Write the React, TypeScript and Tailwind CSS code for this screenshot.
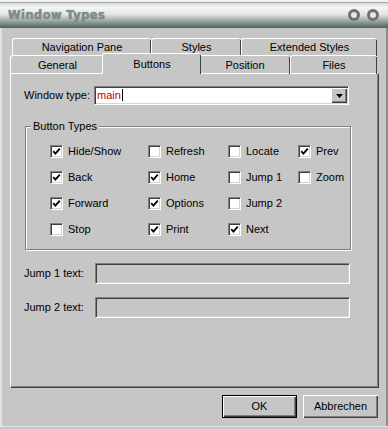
import React from "react";

const sunken =
  "border-t border-l border-t-[#808080] border-l-[#808080] border-b border-r border-b-white border-r-white shadow-[inset_1px_1px_0_#404040,inset_-1px_-1px_0_#d4d4d4]";

const raised =
  "shadow-[inset_1px_1px_0_#ffffff,inset_-1px_-1px_0_#404040,inset_-2px_-2px_0_#808080]";

function CheckBox({ checked }: { checked: boolean }) {
  return (
    <span className={`flex h-[13px] w-[13px] shrink-0 items-center justify-center bg-white ${sunken}`}>
      {checked && (
        <svg width="9" height="9" viewBox="0 0 9 9">
          <polyline
            points="1.2,4.2 3.4,6.6 7.8,1.6"
            fill="none"
            stroke="#000"
            strokeWidth="1.8"
          />
        </svg>
      )}
    </span>
  );
}

function Option({ label, checked }: { label: string; checked: boolean }) {
  return (
    <div className="flex h-[26px] items-center gap-[5px]">
      <CheckBox checked={checked} />
      <span>{label}</span>
    </div>
  );
}

function Tab({
  label,
  width,
  selected = false,
}: {
  label: string;
  width: string;
  selected?: boolean;
}) {
  if (selected) {
    return (
      <div
        className={`relative z-10 -mx-[2px] -mt-[2px] flex h-[21px] items-start justify-center rounded-t-[3px] border-l border-t border-white bg-[#c6c6c6] pt-[2px] shadow-[inset_-1px_0_0_#808080] ${width}`}
      >
        <span className="border-r border-[#404040] absolute right-0 top-[1px] h-[19px]" />
        {label}
      </div>
    );
  }
  return (
    <div
      className={`relative flex h-full items-center justify-center rounded-t-[3px] border-l border-t border-white pt-[1px] shadow-[inset_-1px_0_0_#808080] ${width}`}
    >
      <span className="absolute right-0 top-[1px] h-full border-r border-[#404040]" />
      {label}
    </div>
  );
}

export default function App() {
  return (
    <div className="flex h-[429px] w-[388px] flex-col overflow-hidden bg-[#c6c6c6] font-['Liberation_Sans',Arial,sans-serif] text-[11px] text-black">
      {/* desktop strip */}
      <div className="h-[3px] border-b border-[#a8a8a8] bg-[#f2f2f2]" />

      {/* title bar */}
      <div className="flex h-[25px] items-center justify-between bg-[linear-gradient(to_bottom,#d4d9d7_0%,#f4f6f5_18%,#e2e6e4_45%,#9aa6a2_72%,#4e615b_100%)] pl-[8px] pr-[9px]">
        <span className="font-['DejaVu_Sans',sans-serif] text-[11.5px] font-bold tracking-[0.4px] text-[#848f8c] [text-shadow:0_0_1px_#5a6563]">
          Window Types
        </span>
        <div className="-mt-[2px] flex gap-[7px]">
          <span className="h-[12px] w-[12px] rounded-full border-[3px] border-[#6f6f6f] bg-[#e6e6e6]" />
          <span className="h-[12px] w-[12px] rounded-full border-[3px] border-[#6f6f6f] bg-[#e6e6e6]" />
        </div>
      </div>

      {/* body */}
      <div className="flex flex-1 flex-col border-l-2 border-r-2 border-l-[#e2e2e2] border-r-[#8c8c8c] pl-[8px] pr-[7px] pt-[10px]">
        {/* tabs back row */}
        <div className="ml-[2px] flex h-[17px]">
          <Tab label="Navigation Pane" width="w-[139px]" />
          <Tab label="Styles" width="w-[90px]" />
          <Tab label="Extended Styles" width="w-[136px]" />
        </div>
        {/* tabs front row */}
        <div className="flex h-[18px] items-start">
          <div className="flex h-[18px]">
            <Tab label="General" width="w-[94px]" />
          </div>
          <Tab label="Buttons" width="w-[99px]" selected />
          <div className="flex h-[18px]">
            <Tab label="Position" width="w-[91px]" />
            <Tab label="Files" width="w-[87px]" />
          </div>
        </div>

        {/* tab panel */}
        <div className="h-[315px] w-[369px] border-l border-t border-white border-b border-r border-b-[#404040] border-r-[#404040] shadow-[inset_-1px_-1px_0_#808080]">
          <div className="mt-[12px] flex h-[19px] items-center pl-[13px]">
            <span className="w-[70px]">Window type:</span>
            <div className={`flex h-[19px] w-[255px] items-center bg-white pl-[2px] ${sunken}`}>
              <span className="flex-1 text-[#c00000]">
                main<span className="ml-[1px] inline-block h-[12px] w-[1px] translate-y-[2px] bg-black" />
              </span>
              <div className={`mr-[1px] flex h-[15px] w-[16px] items-center justify-center bg-[#c6c6c6] ${raised}`}>
                <svg width="7" height="4" viewBox="0 0 7 4">
                  <polygon points="0,0 7,0 3.5,4" fill="#000" />
                </svg>
              </div>
            </div>
          </div>

          {/* group box */}
          <div className="relative ml-[14px] mt-[21px] h-[124px] w-[326px] border border-[#808080] shadow-[inset_1px_1px_0_#ffffff,1px_1px_0_#ffffff]">
            <span className="absolute -top-[8px] left-[5px] bg-[#c6c6c6] px-[2px] leading-[14px]">
              Button Types
            </span>
            <div className="grid grid-cols-[98px_80px_70px_auto] pl-[24px] pt-[11px]">
              <Option label="Hide/Show" checked />
              <Option label="Refresh" checked={false} />
              <Option label="Locate" checked={false} />
              <Option label="Prev" checked />
              <Option label="Back" checked />
              <Option label="Home" checked />
              <Option label="Jump 1" checked={false} />
              <Option label="Zoom" checked={false} />
              <Option label="Forward" checked />
              <Option label="Options" checked />
              <Option label="Jump 2" checked={false} />
              <div />
              <Option label="Stop" checked={false} />
              <Option label="Print" checked />
              <Option label="Next" checked />
              <div />
            </div>
          </div>

          {/* jump texts */}
          <div className="mt-[13px] flex h-[21px] items-center pl-[13px]">
            <span className="w-[71px]">Jump 1 text:</span>
            <div className={`h-[21px] w-[255px] bg-[#c6c6c6] ${sunken} shadow-[inset_1px_1px_0_#9a9a9a]`} />
          </div>
          <div className="mt-[13px] flex h-[21px] items-center pl-[13px]">
            <span className="w-[71px]">Jump 2 text:</span>
            <div className={`h-[21px] w-[255px] bg-[#c6c6c6] ${sunken} shadow-[inset_1px_1px_0_#9a9a9a]`} />
          </div>
        </div>

        {/* dialog buttons */}
        <div className="mt-[7px] flex justify-end gap-[6px] pr-[1px]">
          <button className={`h-[23px] w-[75px] border border-black bg-[#c6c6c6] ${raised}`}>
            OK
          </button>
          <button className={`h-[23px] w-[75px] bg-[#c6c6c6] ${raised}`}>
            Abbrechen
          </button>
        </div>
        <div className="flex-1" />
      </div>
      <div className="h-[3px] border-t border-[#e6e6e6] bg-[#c6c6c6]" />
    </div>
  );
}
